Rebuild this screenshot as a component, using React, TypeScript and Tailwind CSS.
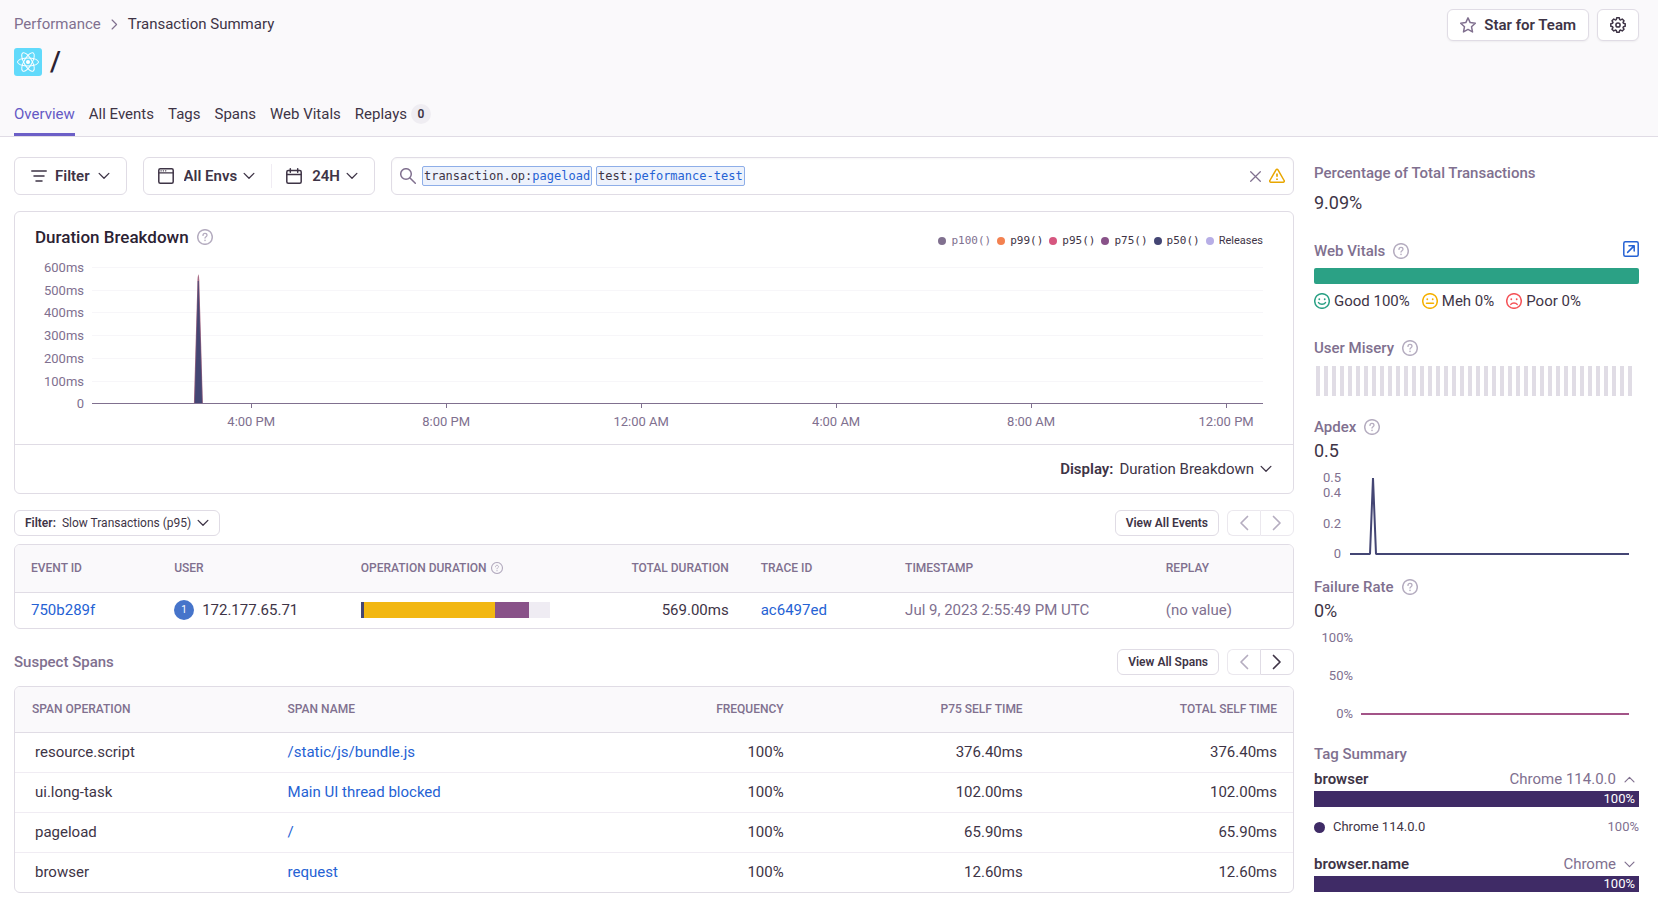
import { useState } from 'react';
import type { ReactNode } from 'react';
import clsx from 'clsx';

const tabs = ['Overview', 'All Events', 'Tags', 'Spans', 'Web Vitals', 'Replays'];

const legend = [
  { label: 'p100()', dot: 'bg-[#80708f]', muted: true },
  { label: 'p99()', dot: 'bg-[#f38150]' },
  { label: 'p95()', dot: 'bg-[#d6567f]' },
  { label: 'p75()', dot: 'bg-[#895289]' },
  { label: 'p50()', dot: 'bg-[#444674]' },
];

const durationTicks = ['600ms', '500ms', '400ms', '300ms', '200ms', '100ms', '0'];

const timeTicks = [
  { label: '4:00 PM', x: '13.6%' },
  { label: '8:00 PM', x: '30.25%' },
  { label: '12:00 AM', x: '46.9%' },
  { label: '4:00 AM', x: '63.55%' },
  { label: '8:00 AM', x: '80.2%' },
  { label: '12:00 PM', x: '96.85%' },
];

const spans = [
  { op: 'resource.script', name: '/static/js/bundle.js', frequency: '100%', p75: '376.40ms', total: '376.40ms' },
  { op: 'ui.long-task', name: 'Main UI thread blocked', frequency: '100%', p75: '102.00ms', total: '102.00ms' },
  { op: 'pageload', name: '/', frequency: '100%', p75: '65.90ms', total: '65.90ms' },
  { op: 'browser', name: 'request', frequency: '100%', p75: '12.60ms', total: '12.60ms' },
];

type IconProps = { className?: string; children?: ReactNode };

const Icon = ({ className = 'size-4', children }: IconProps) => (
  <svg
    className={clsx('shrink-0', className)}
    viewBox="0 0 16 16"
    fill="none"
    stroke="currentColor"
    strokeWidth="1.5"
    strokeLinecap="round"
    strokeLinejoin="round"
    aria-hidden="true"
  >
    {children}
  </svg>
);

const chevrons = {
  down: 'M1.5 4.5L8 11l6.5-6.5',
  up: 'M1.5 11.5L8 5l6.5 6.5',
  left: 'M11.5 1.5L5 8l6.5 6.5',
  right: 'M4.5 1.5L11 8l-6.5 6.5',
};

const Chevron = ({ direction = 'down', className }: { direction?: keyof typeof chevrons; className?: string }) => (
  <Icon className={className ?? 'size-3'}>
    <path d={chevrons[direction]} strokeWidth="1.7" />
  </Icon>
);

const Help = ({ className = 'size-4' }: { className?: string }) => (
  <Icon className={clsx('text-[#b5adc0]', className)}>
    <circle cx="8" cy="8" r="7.3" />
    <path d="M6 6.4c0-1.2.9-2 2-2s2 .8 2 1.8c0 1.4-2 1.5-2 2.9" strokeWidth="1.3" />
    <path d="M8 11.3v.2" />
  </Icon>
);

const Face = ({ mouth, className }: { mouth: string; className: string }) => (
  <Icon className={clsx('size-4', className)}>
    <circle cx="8" cy="8" r="7.3" />
    <path d="M5.3 6.1v.2M10.7 6.1v.2" strokeWidth="1.8" />
    <path d={mouth} />
  </Icon>
);

const ReactLogo = () => (
  <svg className="size-7 rounded-[3px] bg-[#61dafb]" viewBox="0 0 28 28" fill="none" stroke="#fff" aria-hidden="true">
    <circle cx="14" cy="14" r="2" fill="#fff" stroke="none" />
    <ellipse cx="14" cy="14" rx="10.5" ry="4" />
    <ellipse cx="14" cy="14" rx="10.5" ry="4" transform="rotate(60 14 14)" />
    <ellipse cx="14" cy="14" rx="10.5" ry="4" transform="rotate(120 14 14)" />
  </svg>
);

const Dropdown = ({ id, value, label }: { id: string; value: string; label?: string }) => (
  <span className="flex shrink-0 items-center">
    <select
      id={id}
      aria-label={label}
      className="h-6 field-sizing-content shrink-0 cursor-pointer appearance-none bg-transparent pr-[18px] outline-none"
    >
      <option className="font-normal">{value}</option>
    </select>
    <Chevron className="pointer-events-none -ml-3 size-3" />
  </span>
);

const Pager = ({ label, hasNext }: { label: string; hasNext?: boolean }) => (
  <div className="flex h-[26px]" role="group" aria-label={label}>
    <button
      disabled
      aria-label="Previous"
      className="flex w-[33px] items-center justify-center rounded-l-md border border-r-0 border-[#ebe8ee] text-[#b5adc0]"
    >
      <Chevron direction="left" className="size-4" />
    </button>
    <button
      disabled={!hasNext}
      aria-label="Next"
      className={clsx(
        'flex w-[34px] items-center justify-center rounded-r-md border',
        hasNext ? 'border-[#e0dce5] text-[#3e3446]' : 'border-[#ebe8ee] text-[#b5adc0]'
      )}
    >
      <Chevron direction="right" className="size-4" />
    </button>
  </div>
);

const SideHeading = ({ children, help }: { children: ReactNode; help?: boolean }) => (
  <h4 className="flex h-5 items-center gap-2 font-medium text-[#80708f]">
    {children}
    {help && <Help />}
  </h4>
);

const Header = () => {
  const [active, setActive] = useState('Overview');

  return (
    <header className="border-b border-[#e0dce5] bg-[#faf9fb] pr-[19px] pl-3.5">
      <div className="flex justify-between">
        <nav aria-label="Breadcrumb" className="mt-3.5 flex h-5 items-center gap-2 text-[#3e3446]">
          <a href="#performance" className="text-[#80708f]">Performance</a>
          <Chevron direction="right" className="size-[11px] text-[#80708f]" />
          <span>Transaction Summary</span>
        </nav>
        <div className="mt-[9px] flex gap-2">
          <button className="flex h-8 items-center gap-2 rounded-md border border-[#e0dce5] bg-white px-3 font-semibold shadow-xs">
            <Icon className="size-4 text-[#80708f]">
              <path d="M8 .9l2.2 4.7 5.1.6-3.8 3.5 1 5.2L8 12.4l-4.5 2.5 1-5.2L.7 6.2l5.1-.6z" />
            </Icon>
            Star for Team
          </button>
          <button
            aria-label="Settings"
            className="flex h-8 w-[42px] items-center justify-center rounded-md border border-[#e0dce5] bg-white shadow-xs"
          >
            <Icon>
              <circle cx="8" cy="8" r="2.1" />
              <path d="M6.7.8h2.6l.4 1.8 1 .4 1.5-1 1.8 1.8-1 1.5.4 1 1.8.4v2.6l-1.8.4-.4 1 1 1.5-1.8 1.8-1.5-1-1 .4-.4 1.8H6.7l-.4-1.8-1-.4-1.5 1L2 12.2l1-1.5-.4-1-1.8-.4V6.7l1.8-.4.4-1-1-1.5L3.8 2l1.5 1 1-.4z" />
            </Icon>
          </button>
        </div>
      </div>

      <h1 className="mt-[7px] flex h-7 items-center gap-2 text-[28px] font-medium text-[#2b2233]">
        <ReactLogo />
        /
      </h1>

      <div role="tablist" className="mt-7 flex h-8 gap-3.5">
        {tabs.map((tab) => (
          <button
            key={tab}
            role="tab"
            aria-selected={active === tab}
            onClick={() => setActive(tab)}
            className={clsx(
              'flex items-start border-b-3',
              active === tab ? 'border-[#6c5fc7] text-[#6559c5]' : 'border-transparent'
            )}
          >
            <span className="leading-5">{tab}</span>
            {tab === 'Replays' && (
              <span className="ml-1 size-5 rounded-full bg-[#efedf2] text-center text-xs leading-5 font-semibold">0</span>
            )}
          </button>
        ))}
      </div>
    </header>
  );
};

const Toolbar = () => (
  <div className="flex h-[38px] gap-4 font-semibold">
    <button className="flex items-center gap-2 rounded-md border border-[#e0dce5] px-4">
      <Icon>
        <path d="M.8 3h14.4M3 8h10M5 13h6" />
      </Icon>
      Filter
      <Chevron />
    </button>

    <div className="flex items-center rounded-md border border-[#e0dce5]">
      <label htmlFor="env" className="flex pr-2.5 pl-3.5">
        <Icon>
          <rect x=".8" y=".8" width="14.4" height="14.4" rx="1.5" />
          <path d="M1 4.8h14M3 2.8h.2M5.3 2.8h.2M7.6 2.8h.2" strokeWidth="1.3" />
        </Icon>
      </label>
      <Dropdown id="env" label="Environment" value="All Envs" />
      <div className="ml-4 h-6 w-px bg-[#f0ecf3]" />
      <label htmlFor="period" className="flex pr-2.5 pl-3.5">
        <Icon>
          <rect x=".8" y="2.6" width="14.4" height="12.6" rx="1.5" />
          <path d="M1 6.4h14M4.3.8v3.4M11.7.8v3.4" />
        </Icon>
      </label>
      <Dropdown id="period" label="Period" value="24H" />
      <span className="w-4" />
    </div>

    <div className="flex flex-1 items-center rounded-md border border-[#e0dce5] pr-2 pl-2 font-['DejaVu_Sans_Mono',monospace] text-xs font-normal shadow-[inset_0_1px_2px_rgba(43,34,51,0.04)]">
      <Icon className="mr-1.5 size-4 text-[#80708f]">
        <circle cx="6" cy="6" r="5.3" />
        <path d="M10 10l5.3 5.3" />
      </Icon>
      <span className="mr-1 rounded-xs border border-[#8eaee8] bg-[#edf2fc] px-px leading-[18px]">
        transaction.op:<span className="text-[#2562d4]">pageload</span>
      </span>
      <span className="rounded-xs border border-[#8eaee8] bg-[#edf2fc] px-px leading-[18px]">
        test:<span className="text-[#2562d4]">peformance-test</span>
      </span>
      <input aria-label="Search events" className="min-w-0 flex-1 bg-transparent px-1 outline-none" />
      <button aria-label="Clear search" className="mr-2 text-[#80708f]">
        <Icon className="size-[11px]">
          <path d="M1 1l14 14M15 1L1 15" strokeWidth="1.8" />
        </Icon>
      </button>
      <Icon className="size-4 text-[#e8a600]">
        <path d="M7 1.9a1.2 1.2 0 012 0l6.1 10.6a1.1 1.1 0 01-1 1.7H1.9a1.1 1.1 0 01-1-1.7z" />
        <path d="M8 5.4v3.4M8 10.4v1.7" strokeWidth="1.7" strokeLinecap="butt" />
      </Icon>
    </div>
  </div>
);

const DurationChart = () => (
  <section className="mt-4 rounded-md border border-[#e0dce5]">
    <div className="flex items-center pt-[15px] pr-[30px] pl-5">
      <h3 className="text-[17px] leading-5 font-medium text-[#2b2233]">Duration Breakdown</h3>
      <Help className="ml-2 size-4" />
      <ul className="mt-1 -mb-1 ml-auto flex items-center gap-1.5 font-['DejaVu_Sans_Mono',monospace] text-[11px] leading-4">
        {legend.map((item) => (
          <li key={item.label} className={clsx('flex items-center gap-[5px]', item.muted && 'text-[#80708f]')}>
            <span className={clsx('size-2 rounded-full', item.dot)} />
            {item.label}
          </li>
        ))}
        <li className="flex items-center gap-[5px] font-['Roboto',sans-serif]">
          <span className="size-2 rounded-full bg-[#b7aee6]" />
          Releases
        </li>
      </ul>
    </div>

    <div className="mt-2 flex pr-[30px] pl-5 text-[13px]">
      <svg className="h-[189px] w-[57px] shrink-0 fill-[#80708f]">
        {durationTicks.map((tick, i) => (
          <text key={tick} x="49" y={17 + i * 22.7} textAnchor="end">
            {tick}
          </text>
        ))}
      </svg>
      <svg className="h-[189px] min-w-0 flex-1 fill-[#80708f]">
        <g stroke="#f7f6f9" shapeRendering="crispEdges">
          {durationTicks.slice(0, -1).map((tick, i) => (
            <line key={tick} x1="0" x2="100%" y1={12.5 + i * 22.7} y2={12.5 + i * 22.7} />
          ))}
        </g>
        <svg x="8.7%" overflow="visible">
          <path d="M0 148.5L3.6 25Q4.5 14 5.4 25L9 148.5z" fill="#a86a85" />
          <path d="M1 148.5L4.4 26L8.2 148.5z" fill="#444674" stroke="#444674" strokeWidth="0.6" />
        </svg>
        <g stroke="#80708f" shapeRendering="crispEdges">
          <line x1="0" x2="100%" y1="148.5" y2="148.5" />
          {timeTicks.map((tick) => (
            <line key={tick.label} x1={tick.x} x2={tick.x} y1="148" y2="153" />
          ))}
        </g>
        {timeTicks.map((tick) => (
          <text key={tick.label} x={tick.x} y="171" textAnchor="middle">
            {tick.label}
          </text>
        ))}
      </svg>
    </div>

    <div className="flex h-[49px] items-center justify-end border-t border-[#e0dce5] pr-[21px]">
      <label htmlFor="display" className="mr-1.5 font-semibold">Display:</label>
      <Dropdown id="display" value="Duration Breakdown" />
    </div>
  </section>
);

const th = 'px-4 text-left text-xs font-medium text-[#80708f] uppercase';
const miniButton = 'h-[26px] rounded-md border border-[#e0dce5] px-2.5 text-xs font-semibold';

const EventsTable = () => (
  <section className="mt-4">
    <div className="flex justify-between text-xs">
      <div className="flex h-[26px] items-center rounded-md border border-[#e0dce5] px-2.5">
        <label htmlFor="txn-filter" className="mr-1.5 font-semibold">Filter:</label>
        <Dropdown id="txn-filter" value="Slow Transactions (p95)" />
      </div>
      <div className="flex gap-2">
        <button className={miniButton}>View All Events</button>
        <Pager label="Events pages" />
      </div>
    </div>

    <div className="mt-2 overflow-hidden rounded-md border border-[#e0dce5]">
      <table className="w-full table-fixed">
        <colgroup>
          <col className="w-[11.2%]" />
          <col className="w-[14.6%]" />
          <col className="w-[17.3%]" />
          <col className="w-[14%]" />
          <col className="w-[11.3%]" />
          <col className="w-[20.4%]" />
          <col />
        </colgroup>
        <thead>
          <tr className="h-[47px] border-b border-[#e0dce5] bg-[#faf9fb]">
            <th className={th}>Event ID</th>
            <th className={th}>User</th>
            <th className={th}>
              <span className="flex items-center gap-1">
                Operation Duration <Help className="size-3" />
              </span>
            </th>
            <th className="px-4 text-right text-xs font-medium text-[#80708f] uppercase">Total Duration</th>
            <th className={th}>Trace ID</th>
            <th className={th}>Timestamp</th>
            <th className={th}>Replay</th>
          </tr>
        </thead>
        <tbody>
          <tr className="h-9">
            <td className="px-4"><a href="#750b289f" className="text-[#2562d4]">750b289f</a></td>
            <td className="px-4">
              <span className="flex items-center gap-2">
                <span className="size-5 rounded-full bg-[#4674ca] text-center text-[10px] leading-5 text-white">1</span>
                172.177.65.71
              </span>
            </td>
            <td className="px-4">
              <div className="flex h-4 bg-[#efecf3]">
                <div className="w-[2%] bg-[#444674]" />
                <div className="w-[69%] bg-[#f2b712]" />
                <div className="w-[18%] bg-[#895289]" />
              </div>
            </td>
            <td className="px-4 text-right">569.00ms</td>
            <td className="px-4"><a href="#ac6497ed" className="text-[#2562d4]">ac6497ed</a></td>
            <td className="px-4 text-[#80708f]">Jul 9, 2023 2:55:49 PM UTC</td>
            <td className="px-4 text-[#80708f]">(no value)</td>
          </tr>
        </tbody>
      </table>
    </div>
  </section>
);

const SpansTable = () => (
  <section className="mt-5">
    <div className="flex items-center justify-between">
      <h4 className="font-medium text-[#80708f]">Suspect Spans</h4>
      <div className="flex gap-2">
        <button className={miniButton}>View All Spans</button>
        <Pager label="Spans pages" hasNext />
      </div>
    </div>

    <div className="mt-[11px] overflow-hidden rounded-md border border-[#e0dce5]">
      <table className="w-full table-fixed">
        <colgroup>
          <col className="w-[20%]" />
          <col className="w-[24%]" />
          <col className="w-[17.4%]" />
          <col className="w-[18.7%]" />
          <col />
        </colgroup>
        <thead className="text-xs text-[#80708f]">
          <tr className="h-[45px] border-b border-[#e0dce5] bg-[#faf9fb] uppercase">
            <th className="pl-[17px] text-left font-medium">Span Operation</th>
            <th className="pl-[17px] text-left font-medium">Span Name</th>
            <th className="px-4 text-right font-medium">Frequency</th>
            <th className="px-4 text-right font-medium">P75 Self Time</th>
            <th className="px-4 text-right font-medium">Total Self Time</th>
          </tr>
        </thead>
        <tbody>
          {spans.map((span) => (
            <tr key={span.op} className="h-10 border-b border-[#f0ecf3] last:border-b-0">
              <td className="pl-5">{span.op}</td>
              <td className="pl-[17px]"><a href="#span" className="text-[#2562d4]">{span.name}</a></td>
              <td className="px-4 text-right">{span.frequency}</td>
              <td className="px-4 text-right">{span.p75}</td>
              <td className="px-4 text-right">{span.total}</td>
            </tr>
          ))}
        </tbody>
      </table>
    </div>
  </section>
);

const Sidebar = () => (
  <aside className="w-[325px] shrink-0 pt-1.5">
    <SideHeading>Percentage of Total Transactions</SideHeading>
    <p className="mt-2 text-lg leading-6">9.09%</p>

    <div className="mt-[26px] flex justify-between">
      <SideHeading help>Web Vitals</SideHeading>
      <a href="#vitals" aria-label="Open Web Vitals" className="text-[#2562d4]">
        <Icon>
          <rect x=".8" y=".8" width="14.4" height="14.4" rx="1.5" />
          <path d="M4.6 11.4l6.5-6.5M6 4.8h5.2V10" />
        </Icon>
      </a>
    </div>
    <div className="mt-[7px] h-4 rounded-xs bg-[#2ba185]" />
    <ul className="mt-[7px] flex h-5 items-center gap-3">
      <li className="flex items-center gap-1">
        <Face className="text-[#2ba185]" mouth="M4.5 9.6c1.5 2.2 5.5 2.2 7 0" />
        Good 100%
      </li>
      <li className="flex items-center gap-1">
        <Face className="text-[#f5b000]" mouth="M4.5 10.2h7" />
        Meh 0%
      </li>
      <li className="flex items-center gap-1">
        <Face className="text-[#f55459]" mouth="M4.8 11.4c1.4-2 5-2 6.4 0" />
        Poor 0%
      </li>
    </ul>

    <div className="mt-[27px]">
      <SideHeading help>User Misery</SideHeading>
      <div className="mt-2 flex h-[30px] gap-1 pl-0.5">
        {Array.from({ length: 40 }, (_, i) => (
          <div key={i} className="w-1 bg-[#e0dce5]" />
        ))}
      </div>
    </div>

    <div className="mt-[21px]">
      <SideHeading help>Apdex</SideHeading>
      <p className="mt-0.5 text-lg leading-6">0.5</p>
      <svg className="mt-1 h-24 w-full fill-[#80708f] text-[13px]">
        <g textAnchor="end">
          <text x="27" y="15">0.5</text>
          <text x="27" y="30">0.4</text>
          <text x="27" y="61">0.2</text>
          <text x="27" y="91">0</text>
        </g>
        <path d="M36 87h20L59 11l3 76h253" fill="none" stroke="#444674" strokeWidth="2" strokeLinejoin="bevel" />
      </svg>
    </div>

    <div className="mt-3.5">
      <SideHeading help>Failure Rate</SideHeading>
      <p className="mt-0.5 text-lg leading-6">0%</p>
      <svg className="mt-0.5 h-[102px] w-full fill-[#80708f] text-[13px]">
        <g textAnchor="end">
          <text x="39" y="17">100%</text>
          <text x="39" y="55">50%</text>
          <text x="39" y="93">0%</text>
        </g>
        <path d="M47 89h268" stroke="#a35488" strokeWidth="2" />
      </svg>
    </div>

    <div className="mt-[17px]">
      <SideHeading>Tag Summary</SideHeading>
      <button className="mt-[5px] flex h-5 w-full items-center text-[#80708f]">
        <span className="mr-auto font-semibold text-[#3e3446]">browser</span>
        Chrome 114.0.0
        <Chevron direction="up" className="mr-1 ml-2 size-[11px]" />
      </button>
      <div className="mt-0.5 h-4 bg-[#3f2b66] pr-1 text-right text-[13px] leading-4 text-white">100%</div>
      <div className="mt-2.5 flex h-5 items-center text-[13px]">
        <span className="mr-2 size-[11px] rounded-full bg-[#3f2b66]" />
        Chrome 114.0.0
        <span className="ml-auto text-[#80708f]">100%</span>
      </div>
      <button className="mt-[17px] flex h-5 w-full items-center text-[#80708f]">
        <span className="mr-auto font-semibold text-[#3e3446]">browser.name</span>
        Chrome
        <Chevron className="mr-1 ml-2 size-[11px]" />
      </button>
      <div className="mt-0.5 h-4 bg-[#3f2b66] pr-1 text-right text-[13px] leading-4 text-white">100%</div>
    </div>
  </aside>
);

const App = () => (
  <div className="min-h-screen bg-white font-['Roboto',sans-serif] text-[15px] leading-5 text-[#3e3446]">
    <Header />
    <div className="flex gap-5 pt-5 pr-[19px] pl-3.5">
      <main className="min-w-0 flex-1">
        <Toolbar />
        <DurationChart />
        <EventsTable />
        <SpansTable />
      </main>
      <Sidebar />
    </div>
  </div>
);

export default App;
